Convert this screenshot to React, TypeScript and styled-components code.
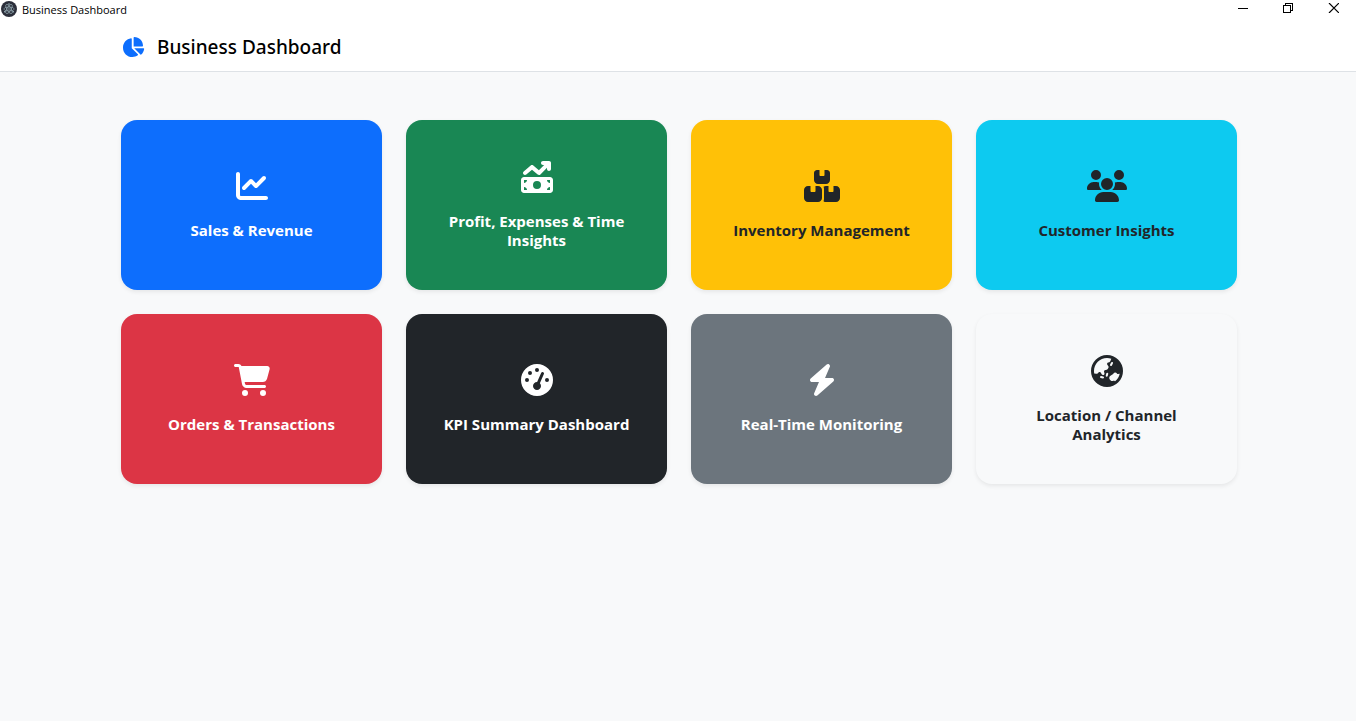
import React from 'react';
import styled, { createGlobalStyle } from 'styled-components';
import type { IconType } from 'react-icons';
import {
  FaBolt,
  FaBoxesStacked,
  FaCartShopping,
  FaChartLine,
  FaChartPie,
  FaEarthAsia,
  FaGaugeHigh,
  FaMoneyBillTrendUp,
  FaUsers,
} from 'react-icons/fa6';

const GlobalStyle = createGlobalStyle`
  *, *::before, *::after { box-sizing: border-box; }
  body {
    margin: 0;
    background: #f8f9fa;
    color: #212529;
    font-family: "Segoe UI", "Open Sans", "Noto Sans", sans-serif;
    font-size: 16px;
  }
`;

const Shell = styled.div`
  min-height: 100vh;
  background: #f8f9fa;
`;

const TitleBar = styled.div`
  display: flex;
  align-items: flex-start;
  height: 18px;
  padding-left: 1px;
  background: #fff;
  color: #000;
`;

const WindowTitle = styled.span`
  flex: 1;
  margin-left: 5px;
  font-size: 11px;
  line-height: 20px;
`;

const WindowButton = styled.button`
  display: flex;
  align-items: center;
  justify-content: center;
  width: 45px;
  height: 16px;
  padding: 0;
  border: 0;
  background: transparent;
  color: #000;
`;

const Container = styled.div`
  max-width: 1142px;
  margin: 0 auto;
  padding: 0 12px 0 14px;
`;

const Header = styled.header`
  background: #fff;
  border-bottom: 1px solid #dee2e6;
`;

const Brand = styled.h1`
  display: flex;
  align-items: center;
  gap: 12px;
  height: 53px;
  margin: 0;
  padding-top: 4px;
  color: #000;
  font-family: "Segoe UI", "Noto Sans", "Open Sans", sans-serif;
  font-size: 19px;
  font-weight: 500;
  line-height: 30px;
`;

const BrandIcon = styled(FaChartPie)`
  width: 24px;
  height: 20px;
  color: #0d6efd;
`;

const Grid = styled.nav`
  display: grid;
  grid-template-columns: repeat(auto-fit, minmax(240px, 1fr));
  gap: 24px;
  padding: 48px 0;
`;

const Card = styled.a<{ $background: string; $color: string }>`
  display: flex;
  flex-direction: column;
  align-items: center;
  justify-content: center;
  gap: 19px;
  min-height: 170px;
  padding: 24px 32px;
  border-radius: 16px;
  background: ${({ $background }) => $background};
  box-shadow: 0 2px 4px rgba(0, 0, 0, 0.075);
  color: ${({ $color }) => $color};
  text-align: center;
  text-decoration: none;

  svg {
    width: 40px;
    height: 32px;
  }
`;

const CardTitle = styled.span`
  font-size: 15px;
  font-weight: 700;
  line-height: 19px;
`;

interface Section {
  title: string;
  href: string;
  icon: IconType;
  background: string;
  color: string;
}

const light = '#fff';
const dark = '#212529';

const sections: Section[] = [
  { title: 'Sales & Revenue', href: '#sales', icon: FaChartLine, background: '#0d6efd', color: light },
  { title: 'Profit, Expenses & Time Insights', href: '#profit', icon: FaMoneyBillTrendUp, background: '#198754', color: light },
  { title: 'Inventory Management', href: '#inventory', icon: FaBoxesStacked, background: '#ffc107', color: dark },
  { title: 'Customer Insights', href: '#customers', icon: FaUsers, background: '#0dcaf0', color: dark },
  { title: 'Orders & Transactions', href: '#orders', icon: FaCartShopping, background: '#dc3545', color: light },
  { title: 'KPI Summary Dashboard', href: '#kpi', icon: FaGaugeHigh, background: '#212529', color: light },
  { title: 'Real-Time Monitoring', href: '#monitoring', icon: FaBolt, background: '#6c757d', color: light },
  { title: 'Location / Channel Analytics', href: '#locations', icon: FaEarthAsia, background: '#f8f9fa', color: dark },
];

const LogoMark = styled.svg`
  margin-top: 1px;
`;

const ElectronLogo = () => (
  <LogoMark width="16" height="16" viewBox="0 0 32 32" aria-hidden="true">
    <circle cx="16" cy="16" r="16" fill="#2b2e3a" />
    <g fill="none" stroke="#a3bcc4" strokeWidth="1.4" opacity="0.85">
      <ellipse cx="16" cy="16" rx="10.5" ry="4" />
      <ellipse cx="16" cy="16" rx="10.5" ry="4" transform="rotate(60 16 16)" />
      <ellipse cx="16" cy="16" rx="10.5" ry="4" transform="rotate(120 16 16)" />
    </g>
    <g fill="#a3bcc4">
      <circle cx="16" cy="16" r="1.3" />
      <circle cx="7.5" cy="21.5" r="1.5" />
      <circle cx="24.5" cy="21.5" r="1.5" />
      <circle cx="16" cy="5.8" r="1.5" />
    </g>
  </LogoMark>
);

const App = () => (
  <Shell>
    <GlobalStyle />
    <TitleBar>
      <ElectronLogo />
      <WindowTitle>Business Dashboard</WindowTitle>
      <WindowButton type="button" aria-label="Minimize">
        <svg width="11" height="10" viewBox="0 0 11 10" shapeRendering="crispEdges">
          <path d="M0 5.5h10" stroke="currentColor" />
        </svg>
      </WindowButton>
      <WindowButton type="button" aria-label="Restore">
        <svg width="11" height="10" viewBox="0 0 11 10" fill="none" shapeRendering="crispEdges">
          <path d="M.5 2.5h7v7h-7zM2.5 2.5v-2h7v7h-2" stroke="currentColor" />
        </svg>
      </WindowButton>
      <WindowButton type="button" aria-label="Close">
        <svg width="11" height="10" viewBox="0 0 11 10">
          <path d="M1 0l10 10M11 0L1 10" stroke="currentColor" strokeWidth="1.2" />
        </svg>
      </WindowButton>
    </TitleBar>
    <Header>
      <Container>
        <Brand>
          <BrandIcon aria-hidden="true" />
          Business Dashboard
        </Brand>
      </Container>
    </Header>
    <main>
      <Container>
        <Grid aria-label="Dashboard sections">
          {sections.map(({ title, href, icon: Icon, background, color }) => (
            <Card key={href} href={href} $background={background} $color={color}>
              <Icon aria-hidden="true" />
              <CardTitle>{title}</CardTitle>
            </Card>
          ))}
        </Grid>
      </Container>
    </main>
  </Shell>
);

export default App;
